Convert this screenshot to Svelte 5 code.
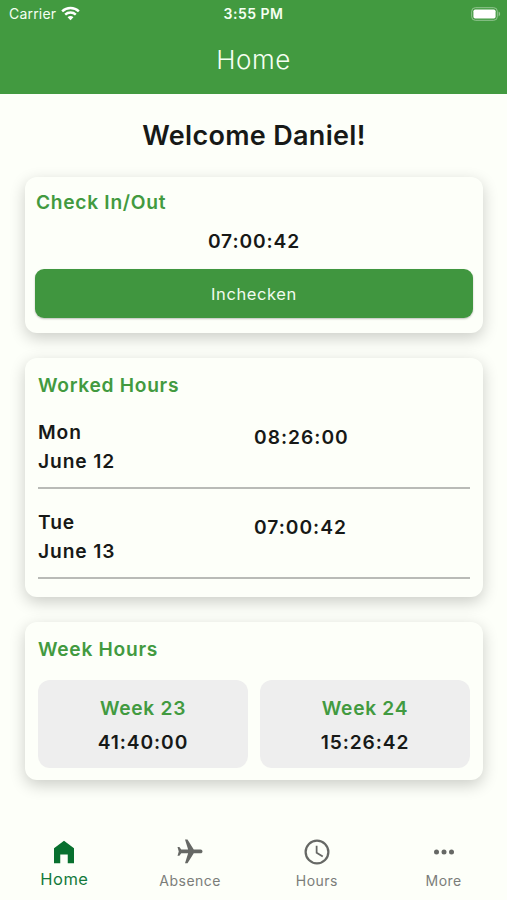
<script lang="ts">
	type Day = {
		name: string;
		date: string;
		hours: string;
	};

	type Week = {
		name: string;
		hours: string;
	};

	const user = 'Daniel';
	const tabs = ['Home', 'Absence', 'Hours', 'More'];

	const days: Day[] = [
		{ name: 'Mon', date: 'June 12', hours: '08:26:00' },
		{ name: 'Tue', date: 'June 13', hours: '07:00:42' }
	];

	const weeks: Week[] = [
		{ name: 'Week 23', hours: '41:40:00' },
		{ name: 'Week 24', hours: '15:26:42' }
	];

	let active = $state('Home');
</script>

<div class="app">
	<header>
		<div class="status">
			<div class="carrier">
				<span>Carrier</span>
				<svg class="wifi" viewBox="0 0 20 15">
					<path d="M1.2 5.2a12.7 12.7 0 0 1 17.6 0" />
					<path d="M4.4 8.6a8.2 8.2 0 0 1 11.2 0" />
					<path class="dot" d="M6.9 11.5a4.7 4.7 0 0 1 6.2 0L10 14.7z" />
				</svg>
			</div>
			<span class="clock">3:55 PM</span>
			<svg class="battery" viewBox="0 0 30 14">
				<rect class="shell" x=".7" y=".7" width="25.6" height="12.6" rx="3.6" />
				<rect x="2.4" y="2.4" width="22.2" height="9.2" rx="1.8" />
				<path class="tip" d="M27.6 4.6c2 .8 2 4 0 4.8z" />
			</svg>
		</div>
		<div class="title">Home</div>
	</header>

	<main>
		<h1>Welcome {user}!</h1>

		<section class="card check">
			<h2>Check In/Out</h2>
			<p class="time">07:00:42</p>
			<button class="check-button">Inchecken</button>
		</section>

		<section class="card worked">
			<h2>Worked Hours</h2>
			{#each days as day}
				<div class="day">
					<div class="date">{day.name}<br />{day.date}</div>
					<div class="hours">{day.hours}</div>
				</div>
			{/each}
		</section>

		<section class="card weeks">
			<h2>Week Hours</h2>
			<div class="week-list">
				{#each weeks as week}
					<div class="week">
						<h3>{week.name}</h3>
						<p>{week.hours}</p>
					</div>
				{/each}
			</div>
		</section>
	</main>

	<nav>
		{#each tabs as tab}
			<button class="tab" class:active={active === tab} onclick={() => (active = tab)}>
				<svg viewBox="0 0 24 24">
					{#if tab === 'Home'}
						<path d="M4 21V9l8-6 8 6v12h-5v-7H9v7z" />
					{:else if tab === 'Absence'}
						<path
							transform="rotate(90 12 12)"
							d="M21 16v-2l-8-5V3.5c0-.83-.67-1.5-1.5-1.5S10 2.67 10 3.5V9l-8 5v2l8-2.5V19l-2 1.5V22l3.5-1 3.5 1v-1.5L13 19v-5.5l8 2.5z"
						/>
					{:else if tab === 'Hours'}
						<path
							d="M12 2a10 10 0 1 0 0 20 10 10 0 0 0 0-20zm0 18.2a8.2 8.2 0 1 1 0-16.4 8.2 8.2 0 0 1 0 16.4zM12.4 7H11v6l5.2 3.1.8-1.2-4.6-2.7z"
						/>
					{:else}
						<circle cx="6" cy="12" r="2" />
						<circle cx="12" cy="12" r="2" />
						<circle cx="18" cy="12" r="2" />
					{/if}
				</svg>
				<span>{tab}</span>
			</button>
		{/each}
	</nav>
</div>

<style>
	:global(body) {
		background: #fdfff9;
	}

	.app {
		display: flex;
		flex-direction: column;
		height: 900px;
		overflow: hidden;
		background: #fdfff9;
		color: #171917;
		font-family: Inter, sans-serif;
	}

	h1,
	h2,
	h3,
	p {
		margin: 0;
	}

	button {
		border: 0;
		padding: 0;
		font-family: inherit;
		cursor: pointer;
	}

	header {
		flex: none;
		height: 94px;
		background: #429a40;
		color: #f5fff2;
	}

	.status {
		display: grid;
		grid-template-columns: 1fr auto 1fr;
		align-items: center;
		height: 27px;
		padding: 0 6px 0 9px;
		font-size: 14px;
	}

	.carrier {
		display: flex;
		align-items: center;
		gap: 5px;
		letter-spacing: 0.2px;
	}

	.wifi {
		width: 19px;
		height: 15px;
		fill: none;
		stroke: #fff;
		stroke-width: 2.6;
	}

	.wifi .dot {
		fill: #fff;
		stroke: none;
	}

	.clock {
		margin-right: 3px;
		font-weight: 600;
		letter-spacing: 0.5px;
	}

	.battery {
		justify-self: end;
		width: 30px;
		height: 14px;
		fill: #fff;
	}

	.shell {
		fill: none;
		stroke: #93c591;
	}

	.tip {
		fill: #93c591;
	}

	.title {
		line-height: 66px;
		font-size: 26px;
		font-weight: 300;
		text-align: center;
		letter-spacing: 0.5px;
	}

	main {
		flex: 1;
		padding: 0 24px 0 25px;
	}

	h1 {
		height: 83px;
		line-height: 84px;
		font-size: 27px;
		font-weight: 600;
		text-align: center;
		letter-spacing: 0.3px;
	}

	.card {
		box-sizing: border-box;
		margin-bottom: 25px;
		border-radius: 12px;
		background: #fdfff9;
		box-shadow: 0 5px 16px rgba(0, 0, 0, 0.2);
		font-size: 19.2px;
		font-weight: 600;
		letter-spacing: 0.9px;
	}

	h2,
	h3 {
		color: #429a40;
		font-size: inherit;
		font-weight: 600;
		letter-spacing: 0.7px;
	}

	.check {
		height: 156px;
		padding: 10px 10px 0;
	}

	.check h2 {
		padding-left: 1px;
		height: 30px;
		line-height: 31px;
	}

	.time {
		height: 48px;
		line-height: 49px;
		text-align: center;
	}

	.check-button {
		display: block;
		width: 100%;
		height: 49px;
		margin-top: 4px;
		border-radius: 9px;
		background: #40963f;
		box-shadow: 0 1px 2px rgba(0, 0, 0, 0.25);
		color: #f0fbef;
		font-size: 16.5px;
		line-height: 50px;
		letter-spacing: 0.6px;
	}

	.worked {
		height: 239px;
		padding: 12px 13px 0;
	}

	.worked h2,
	.weeks h2 {
		height: 30px;
		line-height: 31px;
	}

	.day {
		display: grid;
		grid-template-columns: 1fr 1fr;
		box-sizing: border-box;
		height: 88.5px;
		padding-top: 17.5px;
		border-bottom: 2px solid #b9bbb7;
	}

	.day + .day {
		height: 90px;
		padding-top: 19px;
	}

	.date {
		line-height: 29px;
	}

	.hours {
		line-height: 38px;
		letter-spacing: 1px;
	}

	.weeks {
		height: 158px;
		padding: 12px 13px 0;
	}

	.week-list {
		display: flex;
		gap: 12px;
		margin-top: 16px;
	}

	.week {
		flex: 1;
		box-sizing: border-box;
		height: 88px;
		padding-top: 10.5px;
		border-radius: 12px;
		background: #eee;
		line-height: 34.5px;
		text-align: center;
	}

	nav {
		flex: none;
		display: grid;
		grid-template-columns: repeat(4, 1fr);
		height: 68px;
	}

	.tab {
		display: flex;
		flex-direction: column;
		align-items: center;
		padding-top: 5px;
		background: none;
		color: #7b7d79;
		font-size: 14px;
		letter-spacing: 0.5px;
	}

	.tab svg {
		width: 30px;
		height: 30px;
		fill: #666865;
	}

	.tab span {
		line-height: 28px;
	}

	.tab.active {
		padding-left: 2px;
		color: #147a3c;
		font-size: 16.5px;
	}

	.tab.active svg {
		fill: #08702f;
	}

	.tab.active span {
		line-height: 25px;
	}
</style>
